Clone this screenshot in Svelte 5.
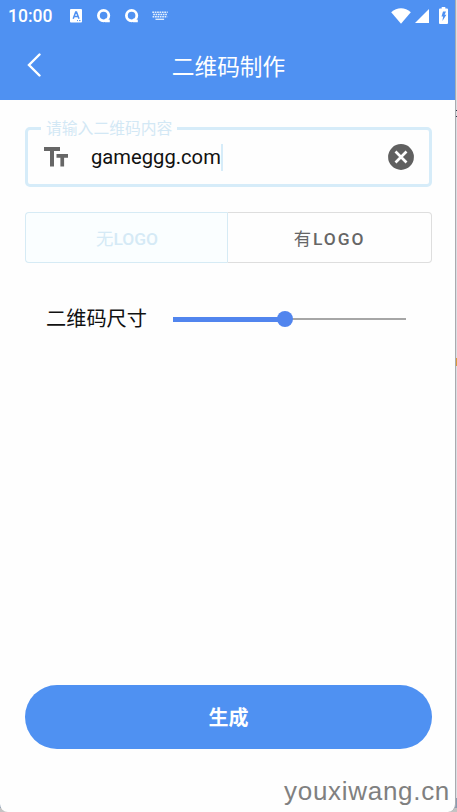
<script>
  let content = "gameggg.com";
  let withLogo = false;
  let size = 48;

  function clearContent() {
    content = "";
  }
</script>

<div class="window">
  <div class="screen">
    <header>
      <div class="status-bar">
        <span class="time">10:00</span>
        <svg class="app-icon" width="12" height="14" viewBox="0 0 12 14">
          <rect width="12" height="13.4" rx="1" fill="#fff" />
          <path d="M3.2 9.7 5.7 3h.8L9 9.7M4.2 7.4h3.9" fill="none" stroke="#4f91f2" stroke-width="1.5" />
          <path d="M7 11.6h1M9 11.6h1.5" stroke="#4f91f2" stroke-width="1" />
        </svg>
        {#each [0, 1] as i (i)}
          <svg class="q-icon" width="14" height="14" viewBox="0 0 14 14">
            <circle cx="6.6" cy="6.6" r="5.2" fill="none" stroke="#fff" stroke-width="2.8" />
            <path d="M8 9.2 9.8 11l3-.6v2.8H8z" fill="#fff" />
          </svg>
        {/each}
        <svg class="keyboard" width="16" height="10" viewBox="0 0 16 10">
          <g stroke="#e3effd" stroke-width="1.4" stroke-dasharray="1.7 .7">
            <path d="M.3 1.2h15.4" />
            <path d="M1.2 3.5h14" />
            <path d="M.6 5.8h14.6" />
          </g>
          <path d="M3.5 8.3h8.6" stroke="#e3effd" stroke-width="1.3" />
        </svg>
        <svg class="wifi" width="20" height="16" viewBox="0 0 20 16">
          <path d="M.2 4.2C6-1 14-1 19.8 4.2L10 15.7z" fill="#fff" />
        </svg>
        <svg class="signal" width="14" height="14" viewBox="0 0 14 14">
          <path d="M14 0v14H0z" fill="#fff" />
        </svg>
        <svg class="battery" width="9" height="17" viewBox="0 0 9 17">
          <path d="M2.7 0h3.6v1.6H8a1 1 0 0 1 1 1V16a1 1 0 0 1-1 1H1a1 1 0 0 1-1-1V2.6a1 1 0 0 1 1-1h1.7z" fill="#fff" />
          <path d="M4 4.5h3L5.6 7.800h1.800L3.400 14l.7-4.400H2.500z" fill="#4f91f2" />
        </svg>
      </div>
      <div class="title-bar">
        <button class="back" aria-label="返回">
          <svg width="14" height="24" viewBox="0 0 14 24">
            <path d="M12.5 1.5 2 12l10.5 10.5" fill="none" stroke="#fff" stroke-width="2.4" stroke-linecap="round" />
          </svg>
        </button>
        <h1>二维码制作</h1>
      </div>
    </header>

    <main>
      <fieldset class="field">
        <legend>请输入二维码内容</legend>
        <div class="field-row">
          <svg class="text-icon" width="24" height="20" viewBox="0 0 24 20">
            <path d="M0 0h16v4h-6v15.5H6V4H0zM12.5 7H24v3.8h-3.9v8.7h-3.7v-8.7h-3.9z" fill="#666" />
          </svg>
          <span class="value">{content}</span>
          <span class="caret"></span>
          <button class="clear" aria-label="清除" on:click={clearContent}>
            <svg width="26" height="26" viewBox="0 0 26 26">
              <circle cx="13" cy="13" r="12.9" fill="#606060" />
              <path d="m7.5 7.5 11 11M18.500 7.500l-11 11" stroke="#fff" stroke-width="2.700" />
            </svg>
          </button>
        </div>
      </fieldset>

      <div class="toggle">
        <button class:selected={!withLogo} on:click={() => (withLogo = false)}>
          <span>无</span>LOGO
        </button>
        <button class="spaced" class:selected={withLogo} on:click={() => (withLogo = true)}>
          <span>有</span>LOGO
        </button>
      </div>

      <div class="size-row">
        <span class="size-label">二维码尺寸</span>
        <div class="slider">
          <div class="filled" style="width: {size}%"></div>
          <div class="thumb"></div>
          <div class="rest"></div>
        </div>
      </div>

      <button class="generate">生成</button>
    </main>
    <footer>youxiwang.cn</footer>
  </div>
</div>

<style>
  :global(body) {
    margin: 0;
  }

  /* the desktop shows as a thin strip to the right of the screen */
  .window {
    width: 457px;
    height: 812px;
    box-sizing: border-box;
    padding-right: 1px;
    background: linear-gradient(
      #dcdee2 110px,
      #2d3548 110px 111px,
      #dcdee2 111px 116px,
      #2d3548 116px 117px,
      #dcdee2 117px 358px,
      #d99a3c 358px 366px,
      #dcdee2 366px 798px,
      #8a9bb0 798px 808px,
      #c4c4c4 808px
    );
    font-family: Roboto, "Noto Sans CJK SC", sans-serif;
    overflow: hidden;
  }

  .screen {
    height: 812px;
    box-sizing: border-box;
    display: flex;
    flex-direction: column;
    border-right: 1px solid #a9abb0;
    border-radius: 0 0 8px 8px;
    background: #fefefe;
    overflow: hidden;
  }

  button {
    margin: 0;
    padding: 0;
    border: 0;
    background: none;
    font-family: inherit;
  }

  svg {
    display: block;
    flex: none;
  }

  header {
    height: 100px;
    background: #4f91f2;
    color: #fff;
  }

  .status-bar {
    display: flex;
    align-items: center;
    height: 32px;
    padding: 0 7px 0 8px;
  }

  .time {
    width: 62px;
    font-size: 17.5px;
    font-weight: 500;
    line-height: 32px;
  }

  .q-icon {
    margin-left: 14px;
  }

  .app-icon + .q-icon {
    margin-left: 15px;
  }

  .keyboard {
    margin-left: 13px;
  }

  .wifi {
    margin-left: auto;
  }

  .signal {
    margin-left: 4px;
  }

  .battery {
    margin-left: 10px;
    margin-top: -2px;
  }

  .title-bar {
    display: grid;
    grid-template-columns: 60px 1fr 58px;
    align-items: center;
    height: 66px;
  }

  .back {
    padding-left: 27px;
  }

  h1 {
    margin: 0;
    padding-top: 5px;
    font-size: 22.7px;
    font-weight: 400;
    line-height: 34px;
    text-align: center;
  }

  main {
    display: flex;
    flex-direction: column;
    flex: 1;
    padding: 19px 23px 0 25px;
  }

  .field {
    height: 68px;
    box-sizing: border-box;
    margin: 0;
    padding: 0 15px 0 13px;
    border: 3px solid #d6ecf9;
    border-radius: 5px;
    min-width: 0;
  }

  legend {
    height: 18px;
    padding: 0 5px;
    color: #d3e8f5;
    font-size: 15.8px;
    line-height: 19px;
  }

  .field-row {
    display: flex;
    align-items: center;
    height: 40px;
  }

  .text-icon {
    margin-left: 3px;
  }

  .value {
    margin-left: 23px;
    color: #111;
    font-size: 20.2px;
    line-height: 26px;
  }

  .caret {
    width: 2px;
    height: 27px;
    background: #d6ecf9;
  }

  .clear {
    margin-left: auto;
  }

  .toggle {
    display: flex;
    height: 51px;
    margin-top: 25px;
  }

  .toggle button {
    box-sizing: border-box;
    width: 205px;
    border: 1px solid #dedede;
    border-radius: 0 4px 4px 0;
    color: #666;
    font-size: 17.4px;
    font-weight: 500;
  }

  .toggle button:first-child {
    width: 202px;
    padding-left: 1px;
    border-right: 0;
    border-radius: 4px 0 0 4px;
  }

  .toggle span {
    font-weight: 400;
  }

  .toggle .selected {
    border-color: #d6ebf5;
    background: #fafeff;
    color: #d5eaf6;
  }

  .toggle .selected + button {
    border-left-color: #d6ebf5;
  }

  .toggle .spaced {
    letter-spacing: 1.9px;
  }

  .size-row {
    display: flex;
    align-items: center;
    height: 40px;
    margin-top: 36px;
    padding: 0 26px 0 21px;
  }

  .size-label {
    color: #111;
    font-size: 20.2px;
    line-height: 30px;
  }

  .slider {
    display: flex;
    align-items: center;
    flex: 1;
    margin-left: 26px;
  }

  .filled {
    height: 5px;
    background: #5185ee;
  }

  .thumb {
    width: 16px;
    height: 16px;
    margin: 0 -8px;
    border-radius: 50%;
    background: #5185ee;
    z-index: 1;
  }

  .rest {
    flex: 1;
    height: 2px;
    background: #a6a6a6;
  }

  .generate {
    height: 64px;
    margin-top: auto;
    padding-bottom: 2px;
    border-radius: 32px;
    background: #4f91f2;
    color: #fff;
    font-size: 20px;
    font-weight: 700;
  }

  footer {
    height: 63px;
    padding-right: 5px;
    color: #808080;
    font-family: "Liberation Sans", Arial, sans-serif;
    font-size: 26px;
    letter-spacing: 0.7px;
    line-height: 85px;
    text-align: right;
  }
</style>
